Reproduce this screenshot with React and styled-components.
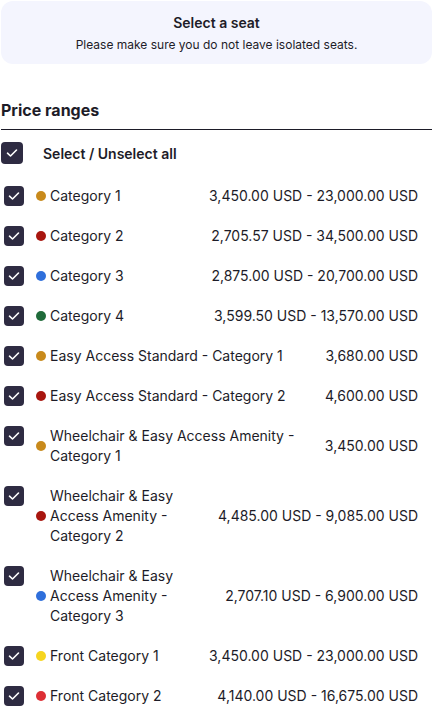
import React from 'react'
import styled, { createGlobalStyle } from 'styled-components'

const Global = createGlobalStyle`
  body {
    margin: 0;
    background: #ffffff;
    font-family: Inter, "Noto Sans", sans-serif;
    color: #1d1c28;
  }
`

const Page = styled.div`
  display: flex;
  flex-direction: column;
  padding: 1px 1px 0 1px;
`

const Banner = styled.div`
  display: flex;
  flex-direction: column;
  align-items: center;
  background: #f4f5fe;
  border-radius: 12px;
  height: 63px;
  padding-top: 13px;
  box-sizing: border-box;
`

const BannerTitle = styled.div`
  font-size: 14px;
  font-weight: 600;
  line-height: 17px;
`

const BannerText = styled.div`
  font-size: 12px;
  line-height: 15px;
  margin-top: 6px;
`

const Heading = styled.div`
  font-size: 16px;
  font-weight: 700;
  line-height: 22px;
  margin-top: 35px;
  padding-bottom: 8px;
  border-bottom: 1.5px solid #1d1c28;
`

const AllRow = styled.div`
  display: flex;
  align-items: center;
  gap: 20px;
  margin-top: 12px;
  font-size: 14px;
  font-weight: 600;
`

const List = styled.div`
  display: flex;
  flex-direction: column;
  gap: 20px;
  margin-top: 22px;
  padding: 0 14px 0 3px;
`

const Row = styled.div`
  display: flex;
  align-items: flex-start;
  font-size: 14px;
  line-height: 20px;
`

const Box = styled.div`
  width: ${p => p.$size}px;
  height: ${p => p.$size}px;
  border-radius: 4px;
  background: #2e2b42;
  display: flex;
  align-items: center;
  justify-content: center;
  flex-shrink: 0;
`

const Body = styled.div`
  display: flex;
  align-items: center;
  flex: 1;
  gap: 20px;
  margin-left: 12px;
  align-self: stretch;
`

const Label = styled.div`
  display: flex;
  align-items: center;
  flex: 1;
`

const Dot = styled.span`
  width: 10px;
  height: 10px;
  border-radius: 50%;
  background: ${p => p.$color};
  flex-shrink: 0;
  margin-right: 4px;
`

const Price = styled.div`
  flex-shrink: 0;
  text-align: right;
`

const Check = () => (
  <svg width="12" height="10" viewBox="0 0 12 10">
    <path d="M1.5 5.2 L4.5 8 L10.5 2" fill="none" stroke="#fff" strokeWidth="1.6" strokeLinecap="round" strokeLinejoin="round" />
  </svg>
)

const rows = [
  { name: 'Category 1', color: '#c88a1c', price: '3,450.00 USD - 23,000.00 USD' },
  { name: 'Category 2', color: '#a8160f', price: '2,705.57 USD - 34,500.00 USD' },
  { name: 'Category 3', color: '#2f6fdb', price: '2,875.00 USD - 20,700.00 USD' },
  { name: 'Category 4', color: '#1f6b3a', price: '3,599.50 USD - 13,570.00 USD' },
  { name: 'Easy Access Standard - Category 1', color: '#c88a1c', price: '3,680.00 USD' },
  { name: 'Easy Access Standard - Category 2', color: '#a8160f', price: '4,600.00 USD' },
  { name: 'Wheelchair & Easy Access Amenity - Category 1', color: '#c88a1c', price: '3,450.00 USD' },
  { name: 'Wheelchair & Easy Access Amenity - Category 2', color: '#a8160f', price: '4,485.00 USD - 9,085.00 USD' },
  { name: 'Wheelchair & Easy Access Amenity - Category 3', color: '#2f6fdb', price: '2,707.10 USD - 6,900.00 USD' },
  { name: 'Front Category 1', color: '#f6d51f', price: '3,450.00 USD - 23,000.00 USD' },
  { name: 'Front Category 2', color: '#dd2f35', price: '4,140.00 USD - 16,675.00 USD' },
]

export default function App() {
  return (
    <Page>
      <Global />
      <Banner>
        <BannerTitle>Select a seat</BannerTitle>
        <BannerText>Please make sure you do not leave isolated seats.</BannerText>
      </Banner>
      <Heading>Price ranges</Heading>
      <AllRow>
        <Box $size={22}><Check /></Box>
        Select / Unselect all
      </AllRow>
      <List>
        {rows.map(r => (
          <Row key={r.name}>
            <Box $size={20}><Check /></Box>
            <Body>
              <Label>
                <Dot $color={r.color} />
                <span>{r.name}</span>
              </Label>
              <Price>{r.price}</Price>
            </Body>
          </Row>
        ))}
      </List>
    </Page>
  )
}
